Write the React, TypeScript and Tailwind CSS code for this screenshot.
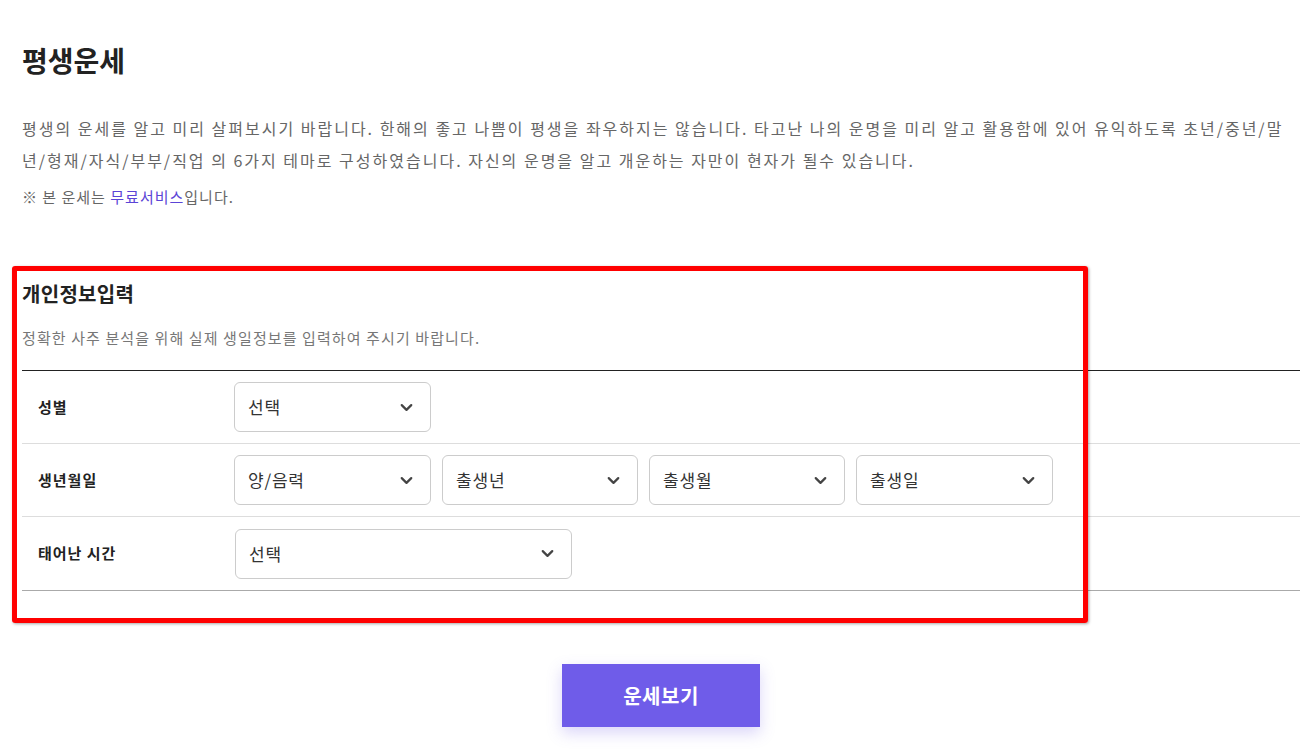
import { ChevronDown } from "lucide-react";

const font = { fontFamily: '"Noto Sans CJK KR", "Noto Sans", sans-serif' };

function Select({ label, className }: { label: string; className: string }) {
  return (
    <div
      className={`flex h-[50px] items-center justify-between rounded-[6px] border border-[#cccccc] bg-white pl-[13px] pr-[14px] text-[17px] tracking-[0.8px] text-[#333] ${className}`}
    >
      <span>{label}</span>
      <ChevronDown className="h-[19px] w-[19px] text-[#444]" strokeWidth={2.8} />
    </div>
  );
}

export default function App() {
  return (
    <div className="relative min-h-[752px] bg-white" style={font}>
      <div className="w-[1300px] pl-[22px] pt-[40px]">
        <h1 className="text-[28px] font-bold leading-[40px] text-[#222]">평생운세</h1>
        <p className="mt-[32px] text-[16px] leading-[32px] tracking-[2px] text-[#666]">
          평생의 운세를 알고 미리 살펴보시기 바랍니다. 한해의 좋고 나쁨이 평생을 좌우하지는 않습니다. 타고난 나의 운명을 미리 알고 활용함에 있어 유익하도록 초년/중년/말년/형재/자식/부부/직업 의 6가지 테마로 구성하였습니다. 자신의 운명을 알고 개운하는 자만이 현자가 될수 있습니다.
        </p>
        <p className="mt-[9px] text-[15px] leading-[24px] tracking-[1px] text-[#666]">
          ※ 본 운세는 <span className="text-[#5b44d6]">무료서비스</span>입니다.
        </p>

        <h2 className="mt-[71px] text-[20px] font-bold leading-[28px] tracking-[0.3px] text-[#222]">
          개인정보입력
        </h2>
        <p className="mt-[20px] text-[15px] leading-[20px] tracking-[1.1px] text-[#777]">
          정확한 사주 분석을 위해 실제 생일정보를 입력하여 주시기 바랍니다.
        </p>

        <div className="mt-[22px] border-t border-[#222] border-b border-b-[#aaaaaa]">
          <div className="flex h-[73px] items-center border-b border-[#dddddd]">
            <div className="w-[212px] pl-[16px] text-[15px] font-bold tracking-[1px] text-[#222]">성별</div>
            <Select label="선택" className="w-[197px]" />
          </div>
          <div className="flex h-[73px] items-center border-b border-[#dddddd]">
            <div className="w-[212px] pl-[16px] text-[15px] font-bold tracking-[1px] text-[#222]">생년월일</div>
            <div className="flex gap-[11px]">
              <Select label="양/음력" className="w-[197px]" />
              <Select label="출생년" className="w-[196px]" />
              <Select label="출생월" className="w-[196px]" />
              <Select label="출생일" className="w-[197px]" />
            </div>
          </div>
          <div className="flex h-[73px] items-center">
            <div className="w-[213px] pl-[16px] text-[15px] font-bold tracking-[1px] text-[#222]">태어난 시간</div>
            <Select label="선택" className="w-[337px]" />
          </div>
        </div>

        <div className="mt-[73px] flex justify-center">
          <button className="h-[63px] w-[198px] bg-[#6f5ce9] text-[20px] font-bold tracking-[0.5px] text-white shadow-[0_6px_14px_rgba(111,92,233,0.25)]">
            운세보기
          </button>
        </div>
      </div>

      <div className="pointer-events-none absolute left-[12px] top-[266px] h-[357px] w-[1076px] rounded-[3px] border-[5px] border-[#ff0000] shadow-[1px_1px_3px_rgba(0,0,0,0.35)]" />
    </div>
  );
}
